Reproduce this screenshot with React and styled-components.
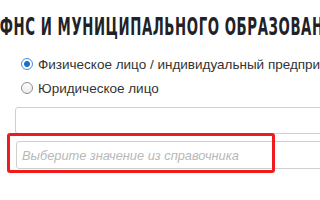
import React from "react";
import styled, { createGlobalStyle } from "styled-components";

const GlobalStyle = createGlobalStyle`
	html, body {
		margin: 0;
		padding: 0;
		background: #fff;
		overflow: hidden;
	}
	body {
		width: 320px;
		height: 200px;
	}
`;

const Page = styled.div`
	position: relative;
	width: 320px;
	height: 200px;
	overflow: hidden;
	font-family: "Liberation Sans", Arial, sans-serif;
`;

const Title = styled.h1`
	margin: 0;
	padding: 14px 0 0 0;
	height: 25px;
	white-space: nowrap;
	font-family: "DejaVu Sans Condensed", "Liberation Sans Narrow", sans-serif;
	font-weight: bold;
	font-size: 25px;
	line-height: 25px;
	color: #222226;
`;

const TitleText = styled.span`
	display: inline-block;
	transform: scaleX(0.59);
	transform-origin: left center;
	margin-left: -12px;
	letter-spacing: 1px;
`;

const Edge = styled.span`
	color: ${(p) => p.$c};
`;

const Form = styled.div`
	display: flex;
	flex-direction: column;
	padding: 13px 0 0 16px;
`;

const RadioRow = styled.label`
	display: flex;
	align-items: center;
	gap: 5px;
	height: 24px;
	white-space: nowrap;
	font-size: 13.5px;
	color: #333;
	padding-left: 5px;
`;

const Radio = styled.span`
	width: 12px;
	height: 12px;
	box-sizing: border-box;
	border-radius: 50%;
	border: 1px solid ${(p) => (p.$checked ? "#4a8fd9" : "#8f8f8f")};
	background: ${(p) =>
		p.$checked
			? "radial-gradient(circle, #1a6fd1 0 2.6px, #fff 3.2px)"
			: "linear-gradient(#fdfdfd, #ececec)"};
	flex: none;
`;

const Input = styled.div`
	box-sizing: border-box;
	width: 400px;
	height: ${(p) => p.$h}px;
	margin-top: ${(p) => p.$mt}px;
	margin-left: ${(p) => p.$ml || 0}px;
	border: 1px solid #cfcfcf;
	border-radius: 3px;
	display: flex;
	align-items: center;
	padding-left: 5px;
	font-size: 12.8px;
	font-style: italic;
	color: #b8b8b8;
	white-space: nowrap;
`;

const Highlight = styled.div`
	position: absolute;
	left: 7px;
	top: 133px;
	width: 268px;
	height: 40px;
	box-sizing: border-box;
	border: 3px solid #ee1c1c;
	border-radius: 3px;
	pointer-events: none;
`;

export default function App() {
	return (
		<Page>
			<GlobalStyle />
			<Title>
				<TitleText>
					<Edge $c="#1c3d8f">И</Edge>ФНС И МУНИЦИПАЛЬНОГО ОБРАЗОВАН
					<Edge $c="#c8a040">ИЯ</Edge>
				</TitleText>
			</Title>
			<Form>
				<RadioRow>
					<Radio $checked />
					Физическое лицо / индивидуальный предприниматель
				</RadioRow>
				<RadioRow>
					<Radio />
					Юридическое лицо
				</RadioRow>
				<Input $h={27} $mt={7} $ml={-1} />
				<Input $h={28} $mt={7}>
					Выберите значение из справочника
				</Input>
			</Form>
			<Highlight />
		</Page>
	);
}
